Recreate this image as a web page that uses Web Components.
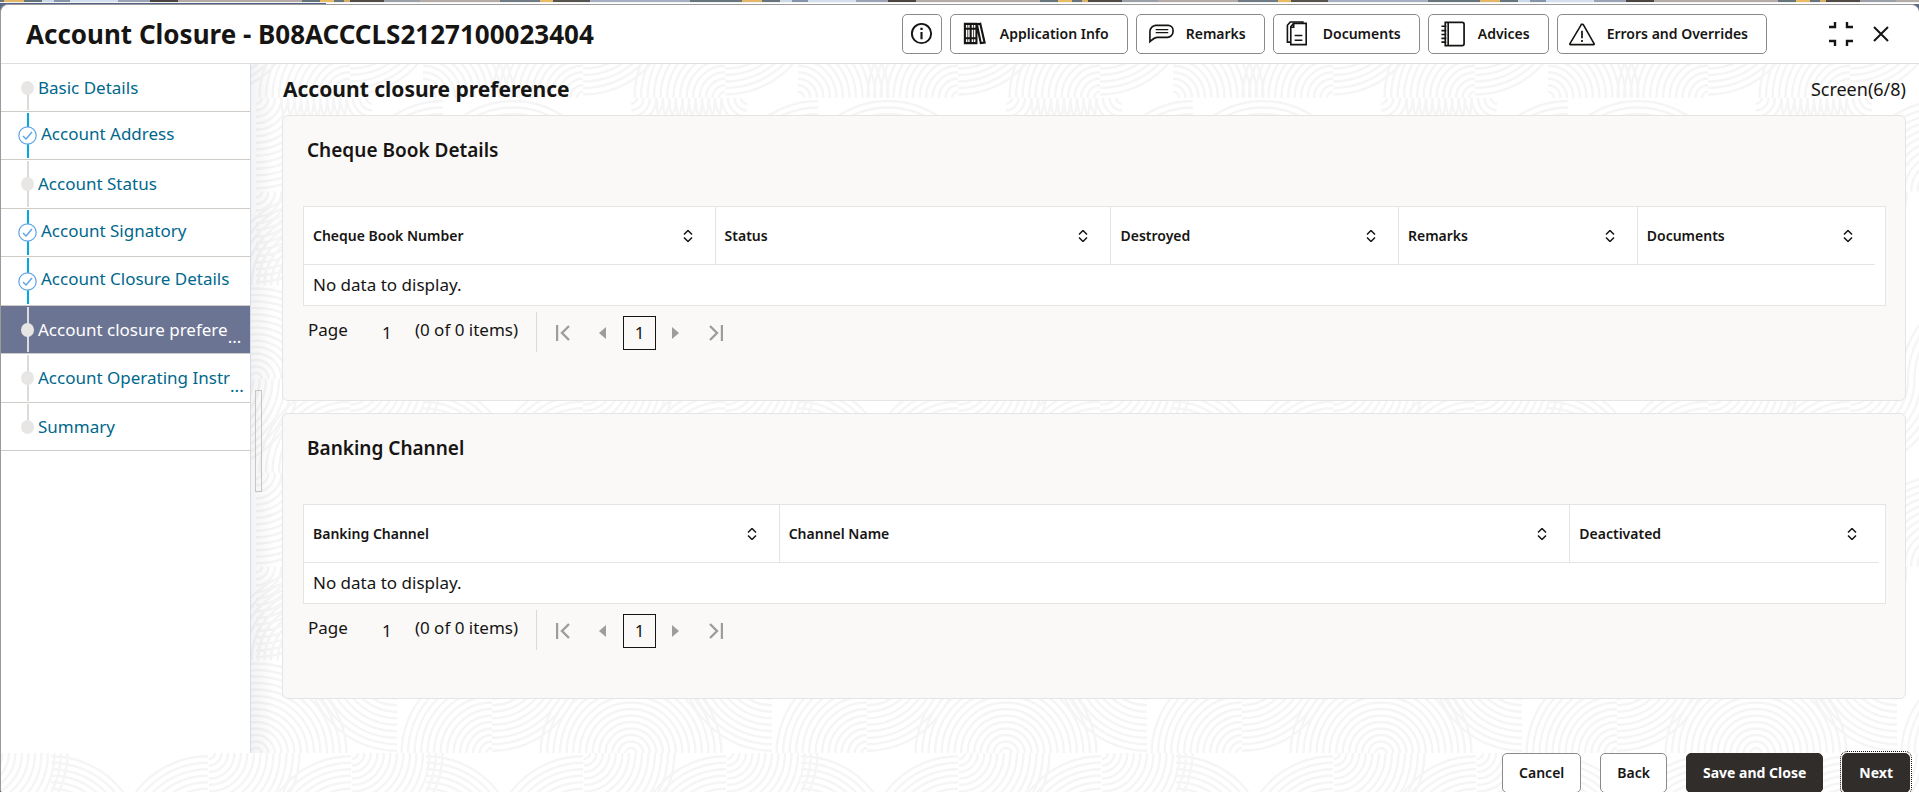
<!DOCTYPE html>
<html lang="en">
<head>
<meta charset="utf-8">
<title>Account Closure</title>
<style>
  html, body { height: 100%; margin: 0; }
  body { overflow: hidden; background: #fff; color: #161513; font-family: "Noto Sans", "Open Sans", sans-serif; font-size: 17px; line-height: 24px; }
</style>
</head>
<body>
<account-closure-page></account-closure-page>

<script>
const define = (name, html, setup) => {
  const template = document.createElement('template');
  template.innerHTML = '<style>*{box-sizing:border-box}button,input{font:inherit;color:inherit}button{cursor:pointer}</style>' + html;
  customElements.define(name, class extends HTMLElement {
    connectedCallback() {
      if (this.shadowRoot) return;
      const root = this.attachShadow({ mode: 'open' });
      root.append(template.content.cloneNode(true));
      if (setup) setup(this, root);
    }
  });
};

/* Faint concentric-arc wallpaper; each entry is [quadrant, centre x] in one row of the tile. */
const TILE = 375, ROW = TILE / 4;
const WALLPAPERS = {
  content: { x: 5, y: -60, rows: [
    [['UL', 327], ['LR', 327], ['UL', 94], ['LR', 94], ['UR', 167]],
    [['LL', 116], ['UL', 187], ['UL', 257], ['UR', 257], ['LR', 0]],
    [['UL', 60], ['LR', 60], ['LL', 300], ['UR', 200], ['LR', 0]],
    [['UL', 0], ['UR', 0], ['LL', 141], ['UL', 236], ['LR', 236]]
  ] },
  footer: { x: 0, y: 0, rows: [
    [['LR', -24], ['UR', 50], ['UL', 207], ['LR', 208], ['UL', 350]], [], [], []
  ] }
};
const arc = (kind, cx, top, r) => {
  const cy = kind[0] === 'U' ? top + ROW : top;
  const sx = kind[1] === 'L' ? -1 : 1, sy = kind[0] === 'U' ? -1 : 1;
  return `M${cx + sx * r} ${cy}A${r} ${r} 0 0 ${sx * sy > 0 ? 1 : 0} ${cx} ${cy + sy * r}`;
};
define('arc-wallpaper', `
  <style>:host{position:absolute;inset:0;pointer-events:none;overflow:hidden} svg{display:block;width:100%;height:100%}</style>
  <svg aria-hidden="true"></svg>`, (host, root) => {
  const w = WALLPAPERS[host.getAttribute('kind')];
  let d = '';
  w.rows.forEach((row, i) => row.forEach(([kind, cx]) => {
    for (const shift of [-TILE, 0, TILE])
      for (let r = 6; r < 92; r += 6.5) d += arc(kind, cx + shift, i * ROW, r);
  }));
  root.querySelector('svg').innerHTML =
    `<pattern id="p" x="${w.x}" y="${w.y}" width="${TILE}" height="${TILE}" patternUnits="userSpaceOnUse">
       <path d="${d}" fill="none" stroke="#f5f5f5" stroke-width="2.4"/></pattern>
     <rect width="100%" height="100%" fill="url(#p)"/>`;
});

const ICONS = {
  info: '<circle cx="13" cy="13" r="10" stroke-width="2"/><path d="M13 11.5V19" stroke-width="2.2"/><path d="M13 7v2.4" stroke-width="2.4"/>',
  books: '<path d="M3 3h6v20H3zM9 3h6v20H9zM15.500 3.500l3.500-.7L23.500 22.500l-4 .5z" stroke-width="2.2"/><path d="M3 8h12M3 18h12" stroke-width="2"/><path d="M6 4v18M12 4v18" stroke-width=".8"/>',
  remarks: '<path d="M8 4.500h13a5 5 0 0 1 5 5v1.500a6 6 0 0 1-6 6H9.500c-3 0-5 2.500-7.500 4.500V11A6.500 6.500 0 0 1 8 4.500z"/><path d="M8 9h13M8 12h13" stroke-width="1.300"/>',
  documents: '<path d="M9 2.500h13v22H6V6z"/><path d="M9 2v4.500H5.500M6 22H2.500V4.500l3-3.500h13v1.500M10 15h8M10 20h8"/>',
  advices: '<path d="M5.500 1.500H23a2 2 0 0 1 2 2v20a2 2 0 0 1-2 2H5.500z" stroke-width="1.800"/><path d="M8.500 1.500v24M1.500 5.500h5M1.500 10h5M1.500 14h5M1.500 18h5M1.500 22h5"/>',
  warning: '<path d="M14 3.500a1 1 0 0 1 1 .6L26 23.500a.6.6 0 0 1-.5 1H1.500a.6.6 0 0 1-.5-1L12.500 4.200a1 1 0 0 1 1.500-.7z"/><path d="M13.500 10v8M13.500 19.800v2" stroke-width="1.800"/>'
};

define('tool-button', `
  <style>
    :host { display: block; }
    button { display: flex; align-items: center; gap: 12px; height: 40px; padding: 0 18px 0 11px; border: 1px solid #8b8a88; border-radius: 5px; background: #fff; font-size: 14px; font-weight: 600; white-space: nowrap; }
    svg { width: 26px; height: 26px; flex: none; fill: none; stroke: #161513; stroke-width: 1.7; overflow: visible; }
    :host([compact]) button { padding: 0 6px; gap: 0; }
  </style>
  <button type="button"><svg viewBox="0 0 27 27" aria-hidden="true"></svg><span><slot></slot></span></button>`, (host, root) => {
  root.querySelector('svg').innerHTML = ICONS[host.getAttribute('icon')];
  if (host.hasAttribute('compact')) {
    root.querySelector('span').remove();
    root.querySelector('button').setAttribute('aria-label', 'Information');
  }
});

define('page-header', `
  <style>
    :host { display: flex; align-items: center; flex: none; height: 59px; padding: 0 30px 0 25px; border-bottom: 1px solid #dededd; background: #fff; border-radius: 8px 8px 0 0; }
    h1 { flex: 1; margin: 0; font-size: 26px; line-height: 32px; font-weight: 700; white-space: nowrap; }
    .tools { display: flex; gap: 8px; }
    .window { display: flex; gap: 19px; margin-left: 61px; }
    .window button { display: flex; padding: 0; border: 0; background: none; }
    svg { display: block; fill: none; stroke: #161513; stroke-width: 2.4; }
  </style>
  <h1>Account Closure - B08ACCCLS2127100023404</h1>
  <div class="tools">
    <tool-button icon="info" compact></tool-button>
    <tool-button icon="books">Application Info</tool-button>
    <tool-button icon="remarks">Remarks</tool-button>
    <tool-button icon="documents">Documents</tool-button>
    <tool-button icon="advices">Advices</tool-button>
    <tool-button icon="warning">Errors and Overrides</tool-button>
  </div>
  <div class="window">
    <button type="button" aria-label="Collapse"><svg width="26" height="26"><path d="M7 1v5H1M19 1v5h6M1 20h6v5M25 20h-6v5"/></svg></button>
    <button type="button" aria-label="Close"><svg width="16" height="26"><path d="M1 6l14 14M15 6L1 20" stroke-width="2"/></svg></button>
  </div>`);

define('step-item', `
  <style>
    :host { display: block; border-bottom: 1px solid #cfccc7; color: #00688c; --rail: #dcdbda; }
    a { display: flex; align-items: stretch; height: 100%; padding: 0 5px 0 16px; color: inherit; text-decoration: none; white-space: nowrap; }
    .rail { display: grid; grid-template: 1fr / 1fr; justify-items: center; align-items: center; width: 21px; padding: 1px 0; }
    .rail > * { grid-area: 1 / 1; }
    .line { width: 2px; height: 100%; background: var(--rail); }
    .dot { width: 13px; height: 14px; border-radius: 50%; background: #e7e6e5; }
    svg { display: none; width: 19px; height: 19px; fill: #fff; stroke: #5ba3e6; stroke-width: 1.2; }
    .label { align-self: center; }
    .more { align-self: end; margin-bottom: 4px; }
    :host([state="first"]) .line { align-self: end; height: 50%; }
    :host([state="last"]) .line { align-self: start; height: 50%; }
    :host([state="done"]) { --rail: #00abe3; }
    :host([state="done"]) .dot { display: none; }
    :host([state="done"]) svg { display: block; }
    :host([state="done"]) .label { padding: 0 0 4px 3px; }
    :host([state="current"]) { background: #6c7494; color: #fff; }
  </style>
  <a href="#"><span class="rail"><span class="line"></span><span class="dot"></span>
    <svg viewBox="0 0 19 19" aria-hidden="true"><circle cx="9.5" cy="9.5" r="8.7"/><path d="M5 10l3 3 6-7" fill="none" stroke-width="1.4"/></svg></span>
    <span class="label"><slot></slot></span><span class="more"><slot name="more"></slot></span></a>`);

define('step-nav', `
  <style>
    :host { display: block; flex: none; width: 250px; border-right: 1px solid #cfdeeb; background: #fff; position: relative; }
    nav { display: flex; flex-direction: column; }
    step-item { height: 49px; }
    step-item:nth-child(even), step-item:first-child { height: 48px; }
  </style>
  <nav aria-label="Steps">
    <step-item state="first">Basic Details</step-item>
    <step-item state="done">Account Address</step-item>
    <step-item>Account Status</step-item>
    <step-item state="done">Account Signatory</step-item>
    <step-item state="done">Account Closure Details</step-item>
    <step-item state="current">Account closure prefere<span slot="more">...</span></step-item>
    <step-item>Account Operating Instr<span slot="more">...</span></step-item>
    <step-item state="last">Summary</step-item>
  </nav>`);

define('data-table', `
  <style>
    :host { display: block; border: 1px solid #e5e4e2; background: #fff; padding-right: var(--table-inset, 10px); }
    table { width: 100%; border-collapse: separate; border-spacing: 0; table-layout: fixed; }
    th { height: 58px; padding: 0; border-bottom: 1px solid #e5e4e2; border-right: 1px solid #e5e4e2; }
    th:last-child { border-right: 0; }
    th button { display: flex; align-items: center; justify-content: space-between; width: 100%; padding: 0 22px 0 9px; border: 0; background: none; font-size: 14px; font-weight: 600; line-height: 24px; text-align: left; white-space: nowrap; }
    svg { width: 10px; height: 12px; fill: none; stroke: #161513; stroke-width: 1.5; }
    td { height: 40px; padding: 0 9px; }
  </style>
  <table><colgroup></colgroup><thead><tr></tr></thead><tbody><tr><td>No data to display.</td></tr></tbody></table>`, (host, root) => {
  const columns = host.getAttribute('columns').split('|').map(c => c.split(':'));
  root.querySelector('colgroup').innerHTML = columns.map(c => `<col style="width:${c[1]}">`).join('');
  root.querySelector('thead tr').innerHTML = columns.map(c =>
    `<th scope="col"><button type="button">${c[0]}<svg aria-hidden="true"><path d="M1 4.500l4-4 4 4M1 7.500l4 4 4-4"/></svg></button></th>`).join('');
  root.querySelector('td').colSpan = columns.length;
});

define('table-pager', `
  <style>
    :host { display: flex; align-items: center; height: 40px; margin-top: 6px; padding-left: 5px; }
    label { margin-bottom: 4px; }
    input { width: 40px; height: 28px; margin-left: 19px; padding: 0; border: 0; background: none; text-align: center; font-size: 17px; }
    .count { margin: 0 18px 4px 8px; white-space: nowrap; }
    nav { display: flex; align-items: center; align-self: stretch; padding: 2px 0 0 19px; border-left: 1px solid #dad9d7; }
    button { display: flex; justify-content: center; align-items: center; padding: 0; border: 0; background: none; }
    svg { display: block; height: 16px; fill: none; stroke: #9e9d9b; stroke-width: 2.4; }
    .solid { fill: #9e9d9b; stroke: none; }
    .page { width: 33px; height: 34px; border: 1px solid #161513; margin: 0 16px; }
    .first { margin-right: 29px; }
    .last { margin-left: 29px; }
  </style>
  <label for="page">Page</label><input id="page" value="1">
  <span class="count">(0 of 0 items)</span>
  <nav aria-label="Pages">
    <button type="button" class="first" aria-label="First page" disabled><svg width="14"><path d="M1 0v16M13 1L6 8l7 7"/></svg></button>
    <button type="button" aria-label="Previous page" disabled><svg width="8" class="solid"><path d="M7 2v12L0 8z"/></svg></button>
    <button type="button" class="page">1</button>
    <button type="button" aria-label="Next page" disabled><svg width="8" class="solid"><path d="M0 2v12l7-6z"/></svg></button>
    <button type="button" class="last" aria-label="Last page" disabled><svg width="14"><path d="M13 0v16M1 1l7 7-7 7"/></svg></button>
  </nav>`);

define('section-card', `
  <style>
    :host { display: block; padding: 20px 19px 48px 20px; border: 1px solid #e6e5e3; border-radius: 6px; background: #faf9f8; }
    h3 { margin: 0 0 42px 4px; font-size: 19px; line-height: 28px; font-weight: 600; }
  </style>
  <h3><slot name="title"></slot></h3><slot></slot>`);

define('preference-panel', `
  <style>
    :host { display: flex; flex: 1; min-width: 0; position: relative; background: #fff; }
    .splitter { position: relative; display: flex; align-items: center; width: 31px; padding: 65px 0 0 4px; background: linear-gradient(to right, #0000000c, #0000 24px); }
    .splitter span { width: 7px; height: 102px; border: 1px solid #c9c6c2; }
    main { position: relative; flex: 1; min-width: 0; padding: 11px 13px 0 0; }
    .bar { display: flex; justify-content: space-between; align-items: center; height: 28px; margin-bottom: 12px; }
    h2 { margin: 0 0 0 1px; font-size: 21px; line-height: 28px; font-weight: 700; }
    .bar span { font-size: 18px; }
    section-card + section-card { margin-top: 12px; }
  </style>
  <arc-wallpaper kind="content"></arc-wallpaper>
  <div class="splitter"><span></span></div>
  <main>
    <div class="bar"><h2>Account closure preference</h2><span>Screen(6/8)</span></div>
    <section-card><span slot="title">Cheque Book Details</span>
      <data-table columns="Cheque Book Number:26.2%|Status:25.2%|Destroyed:18.3%|Remarks:15.2%|Documents:15.1%"></data-table>
      <table-pager></table-pager></section-card>
    <section-card><span slot="title">Banking Channel</span>
      <data-table style="--table-inset:6px" columns="Banking Channel:30.2%|Channel Name:50.2%|Deactivated:19.6%"></data-table>
      <table-pager></table-pager></section-card>
  </main>`);

define('action-button', `
  <style>
    :host { display: block; }
    button { display: block; height: 40px; padding: 0 16px; border: 1px solid #8b8a88; border-radius: 5px; background: #fff; font-size: 14px; font-weight: 600; white-space: nowrap; }
    :host([primary]) button { border-color: #312d2a; background: #312d2a; color: #fff; font-weight: 700; }
    :host([focused]) button { outline: 1px dotted #161513; outline-offset: 1px; }
  </style>
  <button type="button"><slot></slot></button>`);

define('action-footer', `
  <style>
    :host { position: relative; display: flex; justify-content: flex-end; flex: none; height: 39px; padding-right: 9px; background: #fff; }
    div { position: relative; display: flex; gap: 19px; height: 40px; }
  </style>
  <arc-wallpaper kind="footer"></arc-wallpaper>
  <div>
    <action-button>Cancel</action-button>
    <action-button>Back</action-button>
    <action-button primary>Save and Close</action-button>
    <action-button primary focused>Next</action-button>
  </div>`);

define('account-closure-page', `
  <style>
    :host { display: flex; flex-direction: column; height: 100vh; background: #5d6a86; }
    .ribbon { flex: none; height: 2px; background: repeating-linear-gradient(to right,
      #6d7478 0 4px, #e3b765 4px 24px, #66747c 24px 42px, #cdd8e8 42px 54px, #8494ab 54px 70px, #d3deee 70px 118px, #9aa2b6 118px 150px,
      #4a4541 150px 178px, #b5aba6 178px 302px, #66747c 302px 320px, #e9ba5f 320px 334px, #66747c 334px 344px, #d9b066 344px 350px,
      #4f4a45 350px 384px, #9b9fa8 384px 420px, #b5aba6 420px 500px, #6e7b85 500px 540px, #e9ba5f 540px 553px, #56534f 553px 590px,
      #a5b0c4 590px 690px, #66747c 690px 738px); }
    .edge { flex: none; height: 2px; border-top: 1px solid #f4f4f4; background: linear-gradient(to right, #55628a 17%, #fff 17%); }
    .dialog { display: flex; flex-direction: column; flex: 1; min-height: 0; border: solid #9a9a9a; border-width: 1px 0 0 1px; border-radius: 8px 8px 0 3px; background: #fff; overflow: hidden; }
    .body { display: flex; flex: 1; min-height: 0; }
  </style>
  <div class="ribbon"></div><div class="edge"></div>
  <div class="dialog">
    <page-header></page-header>
    <div class="body"><step-nav></step-nav><preference-panel></preference-panel></div>
    <action-footer></action-footer>
  </div>`);
</script>
</body>
</html>
